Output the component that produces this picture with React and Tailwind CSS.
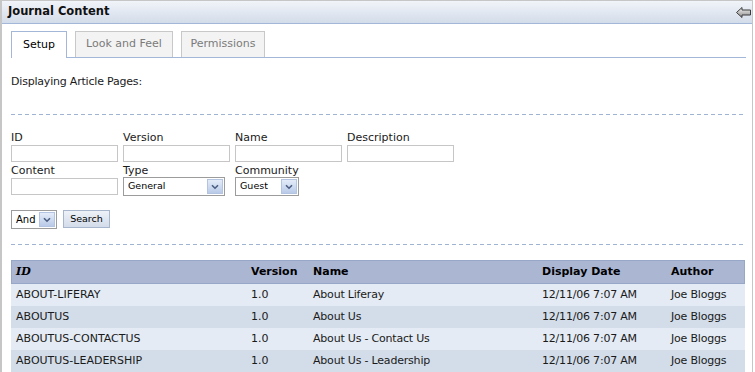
import { useState } from "react";

const font = { fontFamily: '"DejaVu Sans", Verdana, sans-serif' };

const rows = [
  { id: "ABOUT-LIFERAY", version: "1.0", name: "About Liferay", date: "12/11/06 7:07 AM", author: "Joe Bloggs" },
  { id: "ABOUTUS", version: "1.0", name: "About Us", date: "12/11/06 7:07 AM", author: "Joe Bloggs" },
  { id: "ABOUTUS-CONTACTUS", version: "1.0", name: "About Us - Contact Us", date: "12/11/06 7:07 AM", author: "Joe Bloggs" },
  { id: "ABOUTUS-LEADERSHIP", version: "1.0", name: "About Us - Leadership", date: "12/11/06 7:07 AM", author: "Joe Bloggs" },
];

// flecha gris de la barra de titulo
const BackArrow = () => (
  <svg width="15" height="11" viewBox="0 0 15 11">
    <defs>
      <linearGradient id="ag" x1="0" y1="0" x2="0" y2="1">
        <stop offset="0" stopColor="#f6f6f6" />
        <stop offset="1" stopColor="#8a8a8a" />
      </linearGradient>
    </defs>
    <path d="M0.5 5.5 L6 0.5 L6 3 L14.5 3 L14.5 8 L6 8 L6 10.5 Z" fill="url(#ag)" stroke="#3a3a3a" strokeWidth="1" />
  </svg>
);

const Chevron = () => (
  <svg width="8" height="6" viewBox="0 0 8 6">
    <path d="M1 1.2 L4 4.2 L7 1.2" fill="none" stroke="#4a5d80" strokeWidth="1.6" />
  </svg>
);

const Dashed = ({ className = "" }) => (
  <div className={"h-px w-full bg-[repeating-linear-gradient(to_right,#9fb4d3_0_4px,transparent_4px_7px)] " + className} />
);

const Field = ({ label }) => (
  <div className="flex flex-col w-[107px]">
    <span className="text-[11px] leading-[13px] text-[#1a1a1a] h-[14px]">{label}</span>
    <input className="h-[17px] w-[107px] border border-[#c6c6c6] bg-white outline-none" />
  </div>
);

const Select = ({ label, value, width }) => (
  <div className="flex flex-col">
    <span className="text-[11px] leading-[13px] text-[#1a1a1a] h-[13px]">{label}</span>
    <div className={"h-[19px] border border-[#9c9c9c] bg-white flex items-center justify-between " + width}>
      <span className="text-[9.5px] pl-[4px] text-black">{value}</span>
      <div className="w-[16px] h-[15px] mr-px border border-[#b3c3e2] bg-gradient-to-b from-[#e4ecf9] to-[#b9cae8] flex items-center justify-center">
        <Chevron />
      </div>
    </div>
  </div>
);

export default function App() {
  const [tab, setTab] = useState("Setup");
  const tabs = [
    { name: "Setup", w: "w-[56px]" },
    { name: "Look and Feel", w: "w-[98px]" },
    { name: "Permissions", w: "w-[84px]" },
  ];

  return (
    <div className="w-[755px] h-[372px] overflow-hidden bg-white" style={font}>
      <div className="w-[753px] h-[372px] border-t border-l-2 border-r border-[#c6c6c6] flex flex-col">
        {/* barra de titulo */}
        <div className="h-[23px] shrink-0 bg-gradient-to-b from-[#f1f4f9] to-[#d3dcea] border-b border-[#a3b8d8] flex items-center justify-between pl-[6px] pr-[1px]">
          <span className="text-[11.5px] font-bold text-[#111]">Journal Content</span>
          <BackArrow />
        </div>

        <div className="pl-[9px] pr-[6px] flex flex-col">
          {/* pestañas */}
          <div className="mt-[7px] flex gap-[8px] border-b border-[#a3b8d8] h-[27px]">
            {tabs.map((t) =>
              t.name === tab ? (
                <div
                  key={t.name}
                  className={"h-[27px] border border-b-0 border-[#a3b8d8] bg-white flex items-center justify-center text-[11px] text-black " + t.w}
                >
                  {t.name}
                </div>
              ) : (
                <div
                  key={t.name}
                  onClick={() => setTab(t.name)}
                  className={"h-[26px] border border-b-0 border-[#c8c8c8] bg-[#f3f3f3] flex items-center justify-center text-[11px] text-[#7b7b7b] cursor-pointer " + t.w}
                >
                  {t.name}
                </div>
              )
            )}
          </div>

          <p className="mt-[17px] text-[11px] leading-[13px] text-[#1a1a1a] tracking-[-0.2px]">Displaying Article Pages:</p>

          <Dashed className="mt-[26px]" />

          {/* filtros */}
          <div className="mt-[16px] flex gap-[5px]">
            <Field label="ID" />
            <Field label="Version" />
            <Field label="Name" />
            <Field label="Description" />
          </div>
          <div className="mt-[2px] flex gap-[5px] items-start">
            <div className="flex flex-col w-[107px]">
              <span className="text-[11px] leading-[13px] text-[#1a1a1a] h-[14px]">Content</span>
              <input className="h-[17px] w-[107px] border border-[#c6c6c6] bg-white outline-none" />
            </div>
            <Select label="Type" value="General" width="w-[102px]" />
            <div className="ml-[5px]">
              <Select label="Community" value="Guest" width="w-[64px]" />
            </div>
          </div>

          <div className="mt-[14px] flex gap-[6px] items-start">
            <div className="h-[19px] w-[46px] border border-[#9c9c9c] bg-white flex items-center justify-between">
              <span className="text-[10px] pl-[4px] text-black">And</span>
              <div className="w-[16px] h-[15px] mr-px border border-[#b3c3e2] bg-gradient-to-b from-[#e4ecf9] to-[#b9cae8] flex items-center justify-center">
                <Chevron />
              </div>
            </div>
            <button className="h-[18px] w-[47px] border border-[#a7b6cc] bg-gradient-to-b from-[#eef2f8] to-[#d3dcea] text-[9.5px] text-black leading-none">
              Search
            </button>
          </div>

          <Dashed className="mt-[15px]" />

          {/* tabla de resultados */}
          <div className="mt-[15px] w-[734px] text-[11px] text-[#1a1a1a]">
            <div className="grid grid-cols-[235px_62px_229px_129px_79px] h-[24px] items-center bg-[#abb6d3] border border-[#97a7c7] font-bold text-black">
              <span className="pl-[4px] italic" style={{ fontFamily: '"DejaVu Serif", serif' }}>ID</span>
              <span className="pl-[4px]">Version</span>
              <span className="pl-[4px]">Name</span>
              <span className="pl-[4px]">Display Date</span>
              <span className="pl-[4px]">Author</span>
            </div>
            {rows.map((r, i) => (
              <div
                key={r.id}
                className={
                  "grid grid-cols-[235px_62px_229px_129px_79px] h-[22px] items-center " +
                  (i % 2 === 0 ? "bg-[#e4ebf4]" : "bg-[#d3dde9]")
                }
              >
                <span className="pl-[5px]">{r.id}</span>
                <span className="pl-[5px]">{r.version}</span>
                <span className="pl-[5px] tracking-[-0.2px]">{r.name}</span>
                <span className="pl-[5px] tracking-[-0.2px]">{r.date}</span>
                <span className="pl-[5px] tracking-[-0.2px]">{r.author}</span>
              </div>
            ))}
          </div>
        </div>
      </div>
    </div>
  );
}
